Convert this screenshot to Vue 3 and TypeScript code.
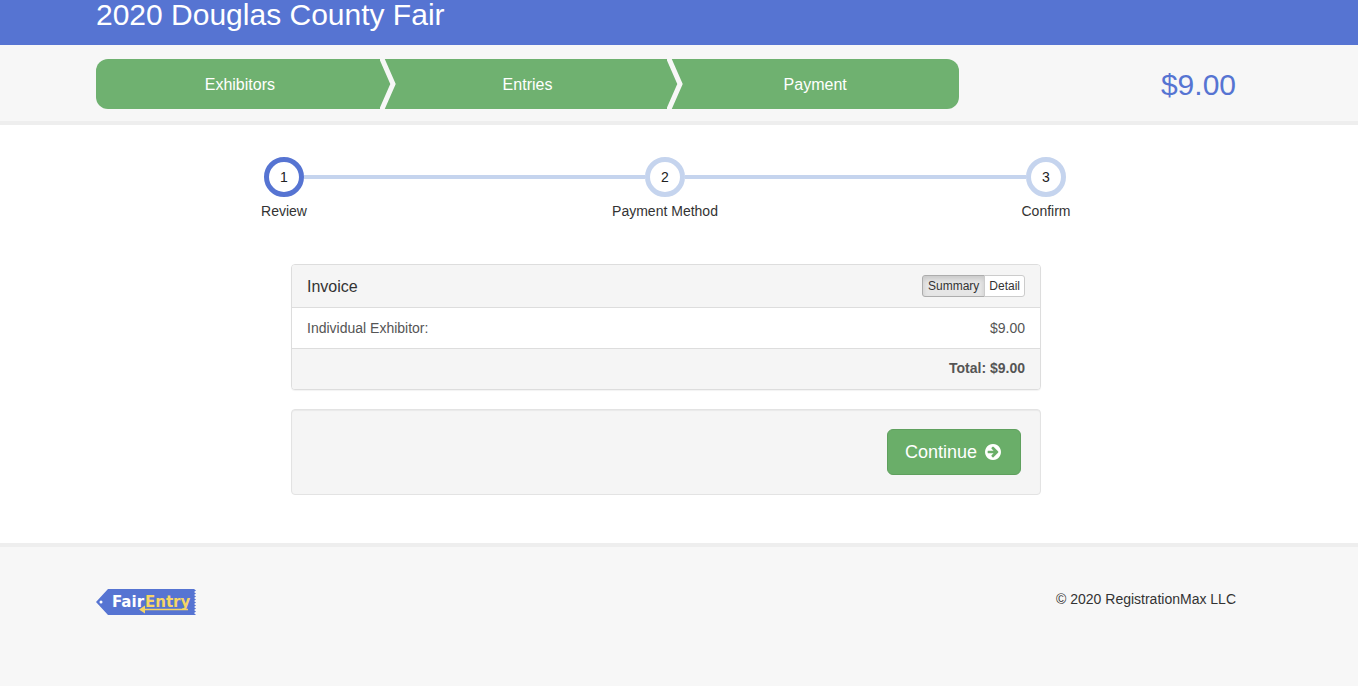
<script setup lang="ts">
const cartSteps: string[] = ['Exhibitors', 'Entries', 'Payment']
const paySteps = [
  { num: 1, label: 'Review', active: true },
  { num: 2, label: 'Payment Method', active: false },
  { num: 3, label: 'Confirm', active: false }
]
</script>

<template>
  <div class="page">
    <header class="top">
      <div class="wrap">
        <h1 class="title">2020 Douglas County Fair</h1>
      </div>
    </header>

    <section class="cart-bar">
      <div class="wrap cart-row">
        <div class="cart-steps">
          <div v-for="(step, i) in cartSteps" :key="step" class="cart-step">
            {{ step }}
            <svg v-if="i < 2" class="chevron" viewBox="0 0 18 50" width="18" height="50">
              <path d="M1.6 -1 L13 25 L1.6 51" fill="none" stroke="#f7f7f7" stroke-width="5" />
            </svg>
          </div>
        </div>
        <div class="cart-total">$9.00</div>
      </div>
    </section>

    <main class="content">
      <div class="wrap">
        <div class="stepper">
          <template v-for="(s, i) in paySteps" :key="s.num">
            <div v-if="i > 0" class="connector"></div>
            <div class="step">
              <div class="circle" :class="{ active: s.active }">{{ s.num }}</div>
              <div class="step-label">{{ s.label }}</div>
            </div>
          </template>
        </div>

        <div class="column">
          <div class="panel">
            <div class="panel-head">
              <span class="panel-title">Invoice</span>
              <div class="toggle">
                <button class="toggle-btn on">Summary</button>
                <button class="toggle-btn">Detail</button>
              </div>
            </div>
            <div class="panel-row">
              <span>Individual Exhibitor:</span>
              <span>$9.00</span>
            </div>
            <div class="panel-foot">Total: $9.00</div>
          </div>

          <div class="well">
            <button class="continue">
              Continue
              <svg class="arrow" viewBox="0 0 1536 1536" width="16" height="16">
                <path fill="#fff" d="M1285 768q0-27-18-45l-91-91-362-362q-18-18-45-18t-45 18l-91 91q-18 18-18 45t18 45l189 189H320q-26 0-45 19t-19 45v128q0 26 19 45t45 19h502l-189 189q-19 19-19 45t19 45l91 91q18 18 45 18t45-18l362-362 91-91q18-18 18-45zm251 0q0 209-103 385.5T1153.5 1433 768 1536t-385.5-103T103 1153.5 0 768t103-385.5T382.500 103 768 0t385.500 103T1433 382.500 1536 768z" />
              </svg>
            </button>
          </div>
        </div>
      </div>
    </main>

    <footer class="bottom">
      <div class="wrap foot-row">
        <svg class="logo" viewBox="0 0 100 26" width="100" height="26">
          <path d="M12 0 H98 L100 1.500 L98 3 L100 4.500 L98 6 L100 7.500 L98 9 L100 10.500 L98 12 L100 13.500 L98 15 L100 16.500 L98 18 L100 19.500 L98 21 L100 22.500 L98 24 L100 26 H12 L0 13 Z" fill="#5674d2" />
          <circle cx="5" cy="13" r="1.500" fill="#fff" />
          <text x="16" y="18" class="logo-fair">Fair</text>
          <text x="49" y="18" class="logo-entry">Entry</text>
          <path d="M92 20.500 H47" stroke="#f5d565" stroke-width="1.500" fill="none" />
          <path d="M43 20.500 L49 16.500 V24.500 Z" fill="#f5d565" />
        </svg>
        <div class="copyright">© 2020 RegistrationMax LLC</div>
      </div>
    </footer>
  </div>
</template>

<style scoped>
.page {
  font-family: "Liberation Sans", Arial, sans-serif;
  font-size: 14px;
  color: #333;
  height: 686px;
  display: flex;
  flex-direction: column;
  overflow: hidden;
}

.wrap {
  width: 1140px;
  margin-left: 96px;
}

.top {
  height: 45px;
  background: #5674d2;
}

.title {
  margin: 0;
  font-size: 30px;
  font-weight: 400;
  line-height: 30px;
  color: #fff;
}

.cart-bar {
  height: 76px;
  background: #f7f7f7;
  border-bottom: 4px solid #eee;
  box-sizing: content-box;
}

.cart-row {
  display: flex;
  justify-content: space-between;
  align-items: center;
  height: 80px;
}

.cart-steps {
  display: flex;
  width: 863px;
  height: 50px;
  margin-bottom: 2px;
  background: #6fb170;
  border-radius: 12px;
  overflow: hidden;
}

.cart-step {
  flex: 1;
  display: flex;
  align-items: center;
  justify-content: center;
  position: relative;
  padding-top: 1px;
  color: #fff;
  font-size: 16px;
}

.chevron {
  position: absolute;
  right: -14px;
  top: 0;
}

.cart-total {
  font-size: 30px;
  color: #5674d2;
}

.content {
  height: 418px;
  background: #fff;
}

.stepper {
  display: grid;
  grid-template-columns: 100px 1fr 100px 1fr 100px;
  width: 862px;
  margin: 32px 0 0 138px;
}

.step {
  display: flex;
  flex-direction: column;
  align-items: center;
}

.circle {
  width: 40px;
  height: 40px;
  box-sizing: border-box;
  border: 5px solid #c5d4ee;
  border-radius: 50%;
  background: #fff;
  display: flex;
  align-items: center;
  justify-content: center;
  color: #222;
}

.circle.active {
  border-color: #5674d2;
}

.step-label {
  margin-top: 4px;
  line-height: 20px;
  color: #333;
  white-space: nowrap;
}

.connector {
  height: 4px;
  margin: 18px -30px 0;
  background: #c5d4ee;
}

.column {
  width: 750px;
  margin: 43px 0 0 195px;
}

.panel {
  border: 1px solid #ddd;
  border-radius: 4px;
  background: #fff;
  box-shadow: 0 1px 1px rgba(0, 0, 0, 0.05);
}

.panel-head {
  display: flex;
  justify-content: space-between;
  align-items: center;
  height: 42px;
  padding: 0 15px;
  background: #f5f5f5;
  border-bottom: 1px solid #ddd;
  border-radius: 3px 3px 0 0;
}

.panel-title {
  padding-top: 1px;
  font-size: 16px;
  color: #333;
}

.toggle {
  display: flex;
}

.toggle-btn {
  height: 22px;
  padding: 0 4px;
  font-family: inherit;
  font-size: 12px;
  line-height: 18px;
  color: #333;
  background: #fff;
  border: 1px solid #ccc;
  border-radius: 0 3px 3px 0;
  margin-left: -1px;
}

.toggle-btn.on {
  padding: 0 5px;
  background: #e6e6e6;
  border-color: #adadad;
  border-radius: 3px 0 0 3px;
  box-shadow: inset 0 3px 5px rgba(0, 0, 0, 0.125);
  margin-left: 0;
}

.panel-row {
  display: flex;
  justify-content: space-between;
  align-items: center;
  height: 40px;
  padding: 0 15px;
  color: #555;
}

.panel-foot {
  height: 40px;
  line-height: 38px;
  padding: 0 15px;
  text-align: right;
  font-weight: 700;
  color: #555;
  background: #f5f5f5;
  border-top: 1px solid #ddd;
  border-radius: 0 0 3px 3px;
}

.well {
  display: flex;
  justify-content: flex-end;
  margin-top: 19px;
  padding: 19px;
  background: #f5f5f5;
  border: 1px solid #e3e3e3;
  border-radius: 4px;
  box-shadow: inset 0 1px 1px rgba(0, 0, 0, 0.05);
}

.continue {
  display: flex;
  align-items: center;
  justify-content: center;
  gap: 8px;
  width: 134px;
  height: 46px;
  padding: 0 2px 0 0;
  font-family: inherit;
  font-size: 18px;
  color: #fff;
  background: #6aae69;
  border: 1px solid #5fa05e;
  border-radius: 6px;
}

.bottom {
  flex: 1;
  background: #f7f7f7;
  border-top: 4px solid #eee;
}

.foot-row {
  display: flex;
  justify-content: space-between;
  align-items: flex-start;
  padding-top: 42px;
}

.logo-fair,
.logo-entry {
  font-family: "DejaVu Sans", sans-serif;
  font-size: 15px;
  font-weight: 700;
}

.logo-fair {
  fill: #fff;
}

.logo-entry {
  fill: #f5d565;
}

.copyright {
  line-height: 20px;
  color: #333;
}
</style>

<style>
body {
  background: #fff;
}
</style>
